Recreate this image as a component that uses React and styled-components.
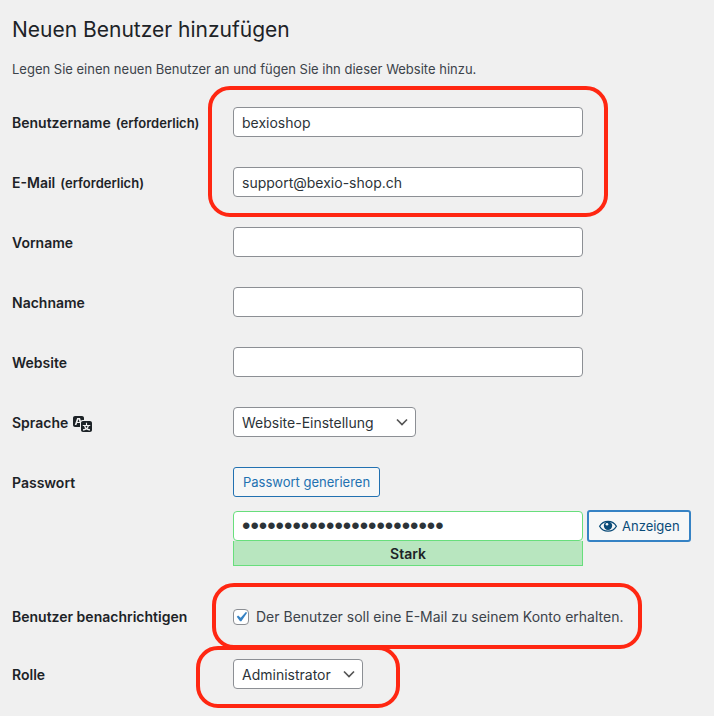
import React from 'react';
import styled, { createGlobalStyle, css } from 'styled-components';

const GlobalStyle = createGlobalStyle`
  * {
    box-sizing: border-box;
  }

  body {
    margin: 0;
    background-color: #f0f0f0;
    color: #3c434a;
    font-family: Inter, 'Liberation Sans', sans-serif;
    font-size: 13px;
  }

  input,
  select,
  button {
    margin: 0;
    font-family: inherit;
  }
`;

const Container = styled.main`
  padding: 12px;
`;

const Title = styled.h1`
  margin: 0;
  font-size: 21px;
  font-weight: 400;
  line-height: 36px;
  color: #1d2327;
`;

const Desc = styled.p`
  margin: 11px 0px 13px;
  line-height: 20px;
`;

const Form = styled.form``;

const Group = styled.div`
  position: relative;
`;

const Label = styled.label`
  display: flex;
  align-items: center;
  gap: 5px;
  height: 30px;
  padding-top: 2px;
  font-size: 14px;
  font-weight: 600;
  line-height: 28px;
  color: #1d2327;
  white-space: nowrap;
`;

const Row = styled.div`
  display: grid;
  grid-template-columns: 221px 1fr;
  align-items: start;
  padding: 15px 0px;
  ${(props) =>
    props.$compact &&
    css`
      padding: 12px 0px;

      ${Label} {
        padding-top: 0px;
      }
    `}
`;

const Required = styled.span`
  font-size: 13px;
`;

const fieldStyle = css`
  height: 30px;
  border: 1px solid #8c8f94;
  border-radius: 4px;
  background-color: #fff;
  color: #2c3338;
  font-size: 14px;
`;

const Input = styled.input`
  ${fieldStyle}
  display: block;
  width: 100%;
  max-width: 350px;
  padding: 0px 8px;
  outline: none;
  ${(props) => props.$strong && 'border-color: #68de7c;'}

  /* bigger dots while the password is hidden */
  &[type='password'] {
    font-family: 'Liberation Sans', sans-serif;
    font-size: 24px;
  }
`;

const Select = styled.select`
  ${fieldStyle}
  width: ${(props) => props.$width};
  padding: 0px 24px 0px 8px;
  appearance: none;
  background-image: url("data:image/svg+xml,%3Csvg xmlns='http://www.w3.org/2000/svg' viewBox='0 0 16 16'%3E%3Cpath d='M3 5.5l5 5 5-5' fill='none' stroke='%23555' stroke-width='1.7'/%3E%3C/svg%3E");
  background-repeat: no-repeat;
  background-position: right 5px center;
  background-size: 16px 16px;
`;

const Button = styled.button`
  display: flex;
  align-items: center;
  justify-content: center;
  gap: 4px;
  height: 30px;
  padding: 0px 9px;
  border: 1px solid #2271b1;
  border-radius: 3px;
  background-color: #f6f7f7;
  color: #2271b1;
  font-size: 13px;
  white-space: nowrap;
  cursor: pointer;
  ${(props) =>
    props.$focused &&
    css`
      height: 32px;
      border: 2px solid #3582c4;
      color: #0a4b78;
    `}
`;

const PasswordContainer = styled.div`
  display: flex;
  align-items: flex-start;
  gap: 4px;
  margin: 13px 0px 9px;
`;

const PasswordField = styled.div`
  flex: 0 1 350px;
  padding-top: 1px;
`;

const Strength = styled.div`
  height: 25px;
  border: 1px solid #68de7c;
  border-top: 0;
  background-color: #b8e6bf;
  color: #1d2327;
  font-size: 14px;
  font-weight: 600;
  line-height: 26px;
  text-align: center;
`;

const CheckLabel = styled.label`
  display: flex;
  align-items: center;
  gap: 7px;
  font-size: 14px;
  line-height: 30px;
`;

const Checkbox = styled.input`
  flex: none;
  width: 16px;
  height: 16px;
  border: 1px solid #8c8f94;
  border-radius: 4px;
  background-color: #fff;
  appearance: none;

  &:checked {
    background-image: url("data:image/svg+xml,%3Csvg xmlns='http://www.w3.org/2000/svg' viewBox='0 0 20 20'%3E%3Cpath d='M14.83 4.89l1.34.94-5.81 8.38H9.02L5.78 9.67l1.34-1.25 2.57 2.4z' fill='%233582c4'/%3E%3C/svg%3E");
    background-position: center;
    background-size: 20px 20px;
  }
`;

const Marker = styled.div`
  position: absolute;
  top: ${(props) => props.$top};
  bottom: ${(props) => props.$bottom};
  left: ${(props) => props.$left};
  width: ${(props) => props.$width};
  border: 4px solid #ff2712;
  border-radius: 22px;
  pointer-events: none;
`;

const TranslationIcon = () => (
  <svg width='20' height='20' viewBox='0 0 20 20' fill='#1d2327' aria-hidden='true'>
    <path d='M11 7H9.49c-.63 0-1.25.3-1.59.7L7 5H4.13l-2.39 7h1.69l.74-2H7v4H2c-1.1 0-2-.9-2-2V5c0-1.1.9-2 2-2h7c1.1 0 2 .9 2 2v2zM6.51 9H4.49l1-2.93zM10 8h7c1.1 0 2 .9 2 2v7c0 1.1-.9 2-2 2h-7c-1.1 0-2-.9-2-2v-7c0-1.1.9-2 2-2zm7.25 5v-1.08h-3.17V9.75h-1.16v2.17H9.75V13h1.28c.11.85.56 1.85 1.28 2.62-.87.36-1.89.62-2.31.62-.01.02.22.97.2 1.46.84 0 2.21-.5 3.28-1.15 1.09.65 2.48 1.15 3.34 1.15-.02-.49.2-1.44.2-1.46-.43 0-1.49-.27-2.38-.63.7-.77 1.14-1.77 1.25-2.61h1.36zm-3.81 1.93c-.5-.46-.85-1.13-1.01-1.93h2.09c-.17.8-.51 1.47-1 1.93l-.04.03s-.03-.02-.04-.03z' />
  </svg>
);

const EyeIcon = () => (
  <svg width='20' height='20' viewBox='0 0 20 20' aria-hidden='true'>
    <path
      d='M1.6 10.3C3.4 7.1 6.5 5.4 10 5.4s6.6 1.7 8.4 4.9c-1.8 3.2-4.9 4.9-8.4 4.9S3.4 13.5 1.6 10.3z'
      fill='none'
      stroke='#0a4b78'
      strokeWidth='1.3'
    />
    <circle cx='10' cy='9.7' r='4.2' fill='#0a4b78' />
    <circle cx='9' cy='8.2' r='1.3' fill='#f6f7f7' />
  </svg>
);

const TextRow = ({ id, label, required, value, type = 'text' }) => (
  <Row>
    <Label htmlFor={id}>
      {label} {required && <Required>(erforderlich)</Required>}
    </Label>
    <Input id={id} type={type} defaultValue={value} />
  </Row>
);

const App = () => {
  const [showPassword, setShowPassword] = React.useState(false);
  const [notify, setNotify] = React.useState(true);

  return (
    <>
      <GlobalStyle />
      <Container>
        <Title>Neuen Benutzer hinzufügen</Title>
        <Desc>
          Legen Sie einen neuen Benutzer an und fügen Sie ihn dieser Website
          hinzu.
        </Desc>
        <Form onSubmit={(e) => e.preventDefault()}>
          <Group>
            <TextRow
              id='username'
              label='Benutzername'
              value='bexioshop'
              required
            />
            <TextRow
              id='email'
              label='E-Mail'
              type='email'
              value='support@bexio-shop.ch'
              required
            />
            <Marker $top='-6px' $bottom='-5px' $left='196px' $width='400px' />
          </Group>
          <TextRow id='firstname' label='Vorname' />
          <TextRow id='lastname' label='Nachname' />
          <TextRow id='website' label='Website' />
          <Row>
            <Label htmlFor='locale'>
              Sprache <TranslationIcon />
            </Label>
            <Select id='locale' $width='183px'>
              <option>Website-Einstellung</option>
            </Select>
          </Row>
          <Row>
            <Label htmlFor='password'>Passwort</Label>
            <div>
              <Button type='button'>Passwort generieren</Button>
              <PasswordContainer>
                <PasswordField>
                  <Input
                    id='password'
                    type={showPassword ? 'text' : 'password'}
                    defaultValue='k8Rw2vQz7LmX4tYb9NcP5sHd'
                    $strong
                  />
                  <Strength>Stark</Strength>
                </PasswordField>
                <Button
                  type='button'
                  onClick={() => setShowPassword(!showPassword)}
                  $focused
                >
                  <EyeIcon />
                  Anzeigen
                </Button>
              </PasswordContainer>
            </div>
          </Row>
          <Group>
            <Row $compact>
              <Label htmlFor='notify'>Benutzer benachrichtigen</Label>
              <CheckLabel>
                <Checkbox
                  id='notify'
                  type='checkbox'
                  checked={notify}
                  onChange={(e) => setNotify(e.target.checked)}
                />
                Der Benutzer soll eine E-Mail zu seinem Konto erhalten.
              </CheckLabel>
            </Row>
            <Marker $top='-7px' $bottom='-5px' $left='200px' $width='430px' />
          </Group>
          <Group>
            <Row>
              <Label htmlFor='role'>Rolle</Label>
              <Select id='role' $width='130px'>
                <option>Administrator</option>
              </Select>
            </Row>
            <Marker $top='2px' $bottom='-4px' $left='184px' $width='204px' />
          </Group>
        </Form>
      </Container>
    </>
  );
};

export default App;
